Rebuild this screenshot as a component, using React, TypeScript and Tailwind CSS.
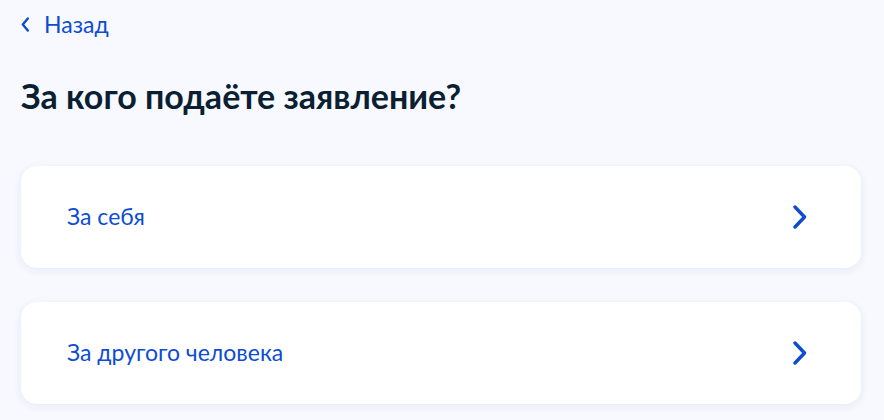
import React from "react";

function Chevron({ className }: { className?: string }) {
  return (
    <svg className={className} viewBox="0 0 14 24" fill="none">
      <path d="M2 2L11.5 12L2 22" stroke="#0d4cd3" strokeWidth="3.4" strokeLinecap="round" strokeLinejoin="round" />
    </svg>
  );
}

function Card({ label }: { label: string }) {
  return (
    <div className="flex h-[102px] items-center justify-between rounded-[16px] bg-white pl-[46px] pr-[54px] shadow-[0_2px_8px_rgba(0,40,140,0.08)]">
      <span className="text-[23px] leading-[28px] text-[#0d4cd3] -mt-[2px]">{label}</span>
      <Chevron className="h-[24px] w-[14px]" />
    </div>
  );
}

export default function App() {
  return (
    <div
      className="min-h-[420px] w-full bg-[#f7f9fe] pl-[21px] pr-[23px]"
      style={{ fontFamily: "Lato, 'Noto Sans', sans-serif" }}
    >
      <div className="flex items-center gap-[14px] pt-[9px] text-[#0d4cd3]">
        <svg className="h-[15px] w-[9px]" viewBox="0 0 9 15" fill="none">
          <path d="M6.8 1.5L1.8 7.5L6.8 13.5" stroke="#0d4cd3" strokeWidth="2.4" strokeLinecap="round" strokeLinejoin="round" />
        </svg>
        <span className="text-[23px] leading-[30px]">Назад</span>
      </div>
      <h1 className="mt-[37px] text-[34px] font-bold leading-[40px] text-[#0b1f33]">
        За кого подаёте заявление?
      </h1>
      <div className="mt-[50px] flex flex-col gap-[34px]">
        <Card label="За себя" />
        <Card label="За другого человека" />
      </div>
    </div>
  );
}
